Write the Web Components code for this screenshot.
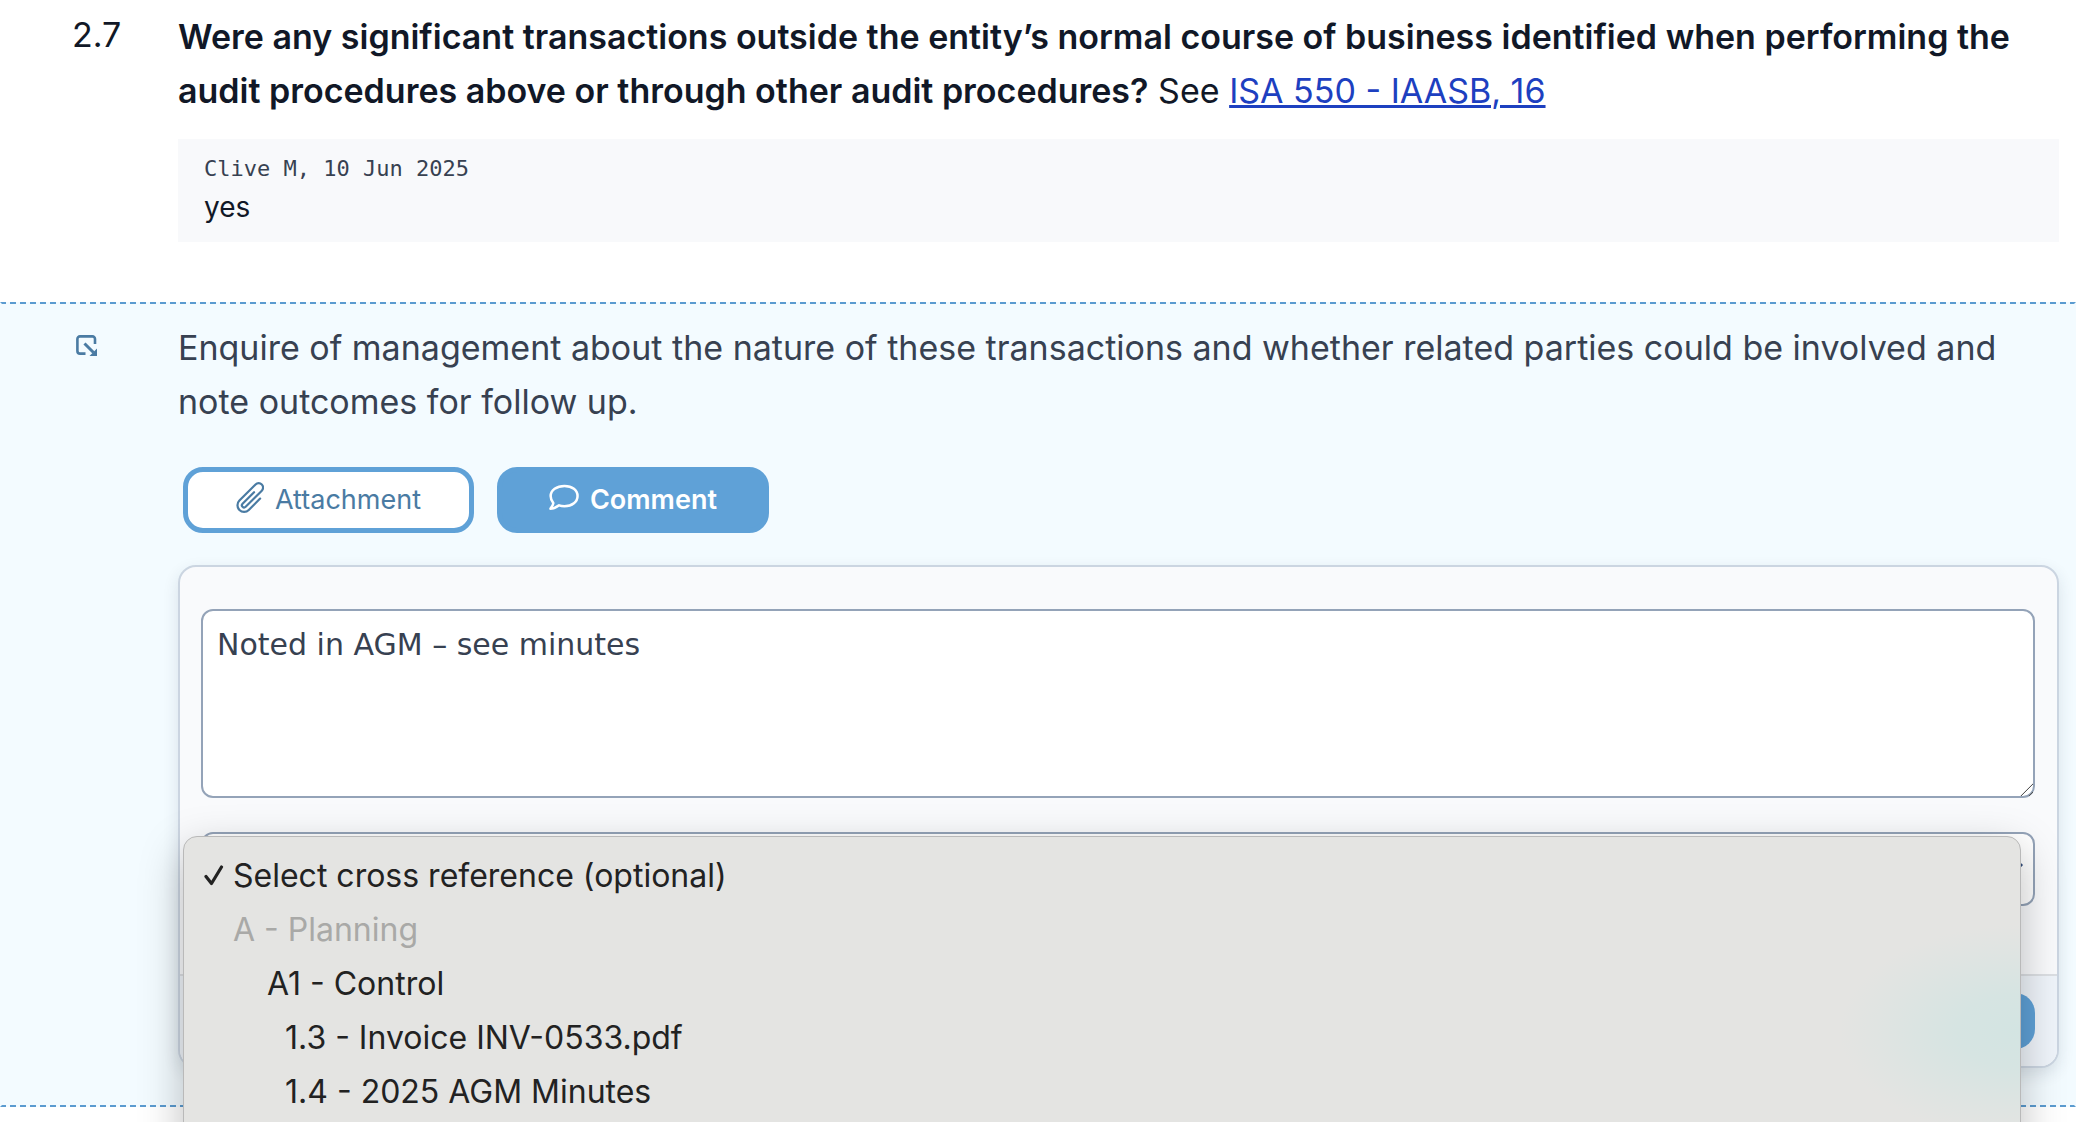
<!DOCTYPE html>
<html lang="en">
<head>
<meta charset="utf-8">
<title>Audit procedures</title>
<style>
body {
    margin: 0;
    background-color: #ffffff;
    color: #111827;
    font-family: Inter, 'Liberation Sans', sans-serif;
    font-size: 34px;
    line-height: 54px;
}
</style>
</head>
<body>

<template id="procedure-row">
<style>
:host {
    display: grid;
    grid-template-columns: 106px minmax(0, 1fr);
    padding: 10px 17px 60px 72px;
}
:host([sub]) {
    padding: 17px 15px 37px 70px;
    border: 2px dashed;
    border-color: #5b9bd0 transparent;
    background-color: #f3fbff;
    color: #374151;
}
.text {
    margin: 0;
}
.ref {
    line-height: 50px;
}
</style>
<div class="ref"><slot name="ref"></slot></div>
<div class="main">
    <p class="text"><slot name="text"></slot></p>
    <slot></slot>
</div>
</template>

<template id="comment-note">
<style>
:host {
    display: block;
    margin-top: 21px;
    padding: 12px 26px 15px;
    background-color: #f8f9fb;
}
.meta {
    color: #374151;
    font-family: 'DejaVu Sans Mono', monospace;
    font-size: 22px;
    line-height: 36px;
}
.body {
    font-size: 28px;
    line-height: 40px;
}
</style>
<div class="meta"><slot name="meta"></slot></div>
<div class="body"><slot></slot></div>
</template>

<template id="sub-icon">
<style>
:host {
    display: block;
    padding: 14px 0 0 4px;
    line-height: 0;
}
</style>
<svg width="22" height="22" viewBox="0 0 22 22" fill="none" stroke="#4a7ba3" stroke-width="2.600">
    <path d="M19 9V4a2.600 2.600 0 0 0-2.600-2.600H4A2.600 2.600 0 0 0 1.400 4v12A2.600 2.600 0 0 0 4 18.600h5.500"/>
    <path d="M8.500 8.500l9 9" stroke-width="3"/>
    <path d="M21 13.500v7.500h-7.500z" fill="#4a7ba3" stroke="none"/>
</svg>
</template>

<template id="action-button">
<style>
:host {
    display: block;
}
button {
    display: flex;
    align-items: center;
    gap: 11px;
    height: 66px;
    padding: 0 48px;
    border: 5px solid #5fa1d7;
    border-radius: 20px;
    background-color: #ffffff;
    color: #4a7ba3;
    font: 400 27px/40px Inter, sans-serif;
}
:host([primary]) button {
    padding: 0 47px;
    background-color: #5fa1d7;
    color: #ffffff;
    font-weight: 600;
}
::slotted(svg) {
    margin-bottom: 5px;
}
</style>
<button type="button"><slot name="icon"></slot><slot></slot></button>
</template>

<template id="comment-form">
<style>
:host {
    display: block;
    margin-top: 32px;
    border: 2px solid #cbd5e1;
    border-radius: 18px;
    background-color: #f9fafc;
    box-shadow: 0 6px 16px rgba(30, 50, 70, 0.12);
}
.fields {
    display: flex;
    flex-direction: column;
    gap: 34px;
    padding: 42px 22px 68px 21px;
}
textarea {
    display: block;
    box-sizing: border-box;
    width: 100%;
    height: 189px;
    margin: 0;
    padding: 14px;
    border: 2px solid #94a3b8;
    border-radius: 12px;
    background-color: #ffffff;
    color: #374151;
    font: 400 30px/40px 'DejaVu Sans', sans-serif;
    resize: vertical;
}
textarea::-webkit-scrollbar {
    width: 18px;
    height: 18px;
}
textarea::-webkit-resizer {
    background: linear-gradient(135deg, transparent 53%, #555555 54%, #555555 58%, transparent 59%, transparent 78%, #555555 79%, #555555 83%, transparent 84%) 0 0 / 16px 16px no-repeat;
}
.footer {
    display: flex;
    justify-content: flex-end;
    padding: 17px 22px;
    border-top: 2px solid #dcdfe3;
    border-radius: 0 0 16px 16px;
    background-color: #eff4fa;
}
.save {
    width: 160px;
    height: 56px;
    border: 0;
    border-radius: 20px;
    background-color: #5fa1d7;
}
</style>
<div class="fields">
    <textarea aria-label="Comment">Noted in AGM – see minutes</textarea>
    <cross-reference></cross-reference>
</div>
<div class="footer"><button class="save" type="submit" aria-label="Save"></button></div>
</template>

<template id="cross-reference">
<style>
:host {
    display: block;
    position: relative;
}
.field {
    display: grid;
    align-items: center;
}
.field > * {
    grid-area: 1 / 1;
}
select {
    box-sizing: border-box;
    width: 100%;
    height: 74px;
    border: 2px solid #94a3b8;
    border-radius: 12px;
    background-color: #ffffff;
    appearance: none;
}
svg {
    justify-self: end;
    margin-right: 11px;
}
/* open list, lies over the form and runs past the page */
.menu {
    position: absolute;
    z-index: 1;
    top: 4px;
    left: -18px;
    right: 14px;
    height: 420px;
    box-sizing: border-box;
    margin: 0;
    padding: 12px 20px;
    border: 1px solid #b9b9b9;
    border-radius: 14px;
    background: radial-gradient(ellipse 180px 106px at 100% 194px, #d3e4e2 0%, #d6e4e2 35%, #dfe4e2 75%, #e4e4e2 100%) #e4e4e2;
    box-shadow: 0 14px 44px rgba(0, 0, 0, 0.26);
    color: #222222;
    font-family: Inter, sans-serif;
    font-size: 32px;
    list-style: none;
}
.menu li {
    display: flex;
    align-items: center;
    height: 54px;
    padding-left: 29px;
}
.menu li.selected {
    gap: 9px;
    padding-left: 0;
}
.menu .group {
    color: #a9a9a7;
}
.menu .level1 {
    padding-left: 63px;
}
.menu .level2 {
    padding-left: 81px;
}
.menu svg {
    margin: 0;
}
</style>
<div class="field">
    <select aria-label="Cross reference"></select>
    <svg width="24" height="14" viewBox="0 0 24 14" fill="none" stroke="#2f4a7a" stroke-width="3"><path d="M2 2l10 10L22 2"/></svg>
</div>
<ul class="menu" role="listbox" aria-label="Cross reference">
    <li class="selected" role="option" aria-selected="true"><svg width="20" height="22" viewBox="0 0 20 22" fill="none" stroke="#222222" stroke-width="3.200" stroke-linecap="round" stroke-linejoin="round"><path d="M2 11.500l5.500 7L17.500 2"/></svg>Select cross reference (optional)</li>
    <li class="group">A - Planning</li>
    <li class="level1" role="option">A1 - Control</li>
    <li class="level2" role="option">1.3 - Invoice INV-0533.pdf</li>
    <li class="level2" role="option">1.4 - 2025 AGM Minutes</li>
</ul>
</template>

<template id="audit-page">
<style>
:host {
    display: block;
    height: 100vh;
    overflow: hidden;
}
.actions {
    display: flex;
    gap: 23px;
    padding: 38px 5px 0;
}
b {
    font-weight: 600;
}
a {
    color: #1d40c0;
    text-decoration-thickness: 3px;
}
</style>
<procedure-row>
    <span slot="ref">2.7</span>
    <span slot="text"><b>Were any significant transactions outside the entity’s normal course of business identified when performing the audit procedures above or through other audit procedures?</b> See <a href="#isa550">ISA 550 - IAASB, 16</a></span>
    <comment-note><span slot="meta">Clive M, 10 Jun 2025</span>yes</comment-note>
</procedure-row>
<procedure-row sub>
    <sub-icon slot="ref"></sub-icon>
    <span slot="text">Enquire of management about the nature of these transactions and whether related parties could be involved and note outcomes for follow up.</span>
    <div class="actions">
        <action-button>
            <svg slot="icon" width="28" height="31" viewBox="2 1.500 19 21" fill="none" stroke="currentColor" stroke-width="1.500" stroke-linecap="round" stroke-linejoin="round"><path d="m18.375 12.739-7.693 7.693a4.500 4.500 0 0 1-6.364-6.364l10.940-10.940A3 3 0 1 1 19.500 7.372L8.552 18.320m5.698-9.941-7.810 7.810a1.500 1.500 0 0 0 2.112 2.130"/></svg>
            Attachment
        </action-button>
        <action-button primary>
            <svg slot="icon" width="30" height="27" viewBox="0 0 31 27" fill="none" stroke="currentColor" stroke-width="2.600" stroke-linejoin="round"><path d="M16 1.500C24 1.500 29.500 6 29.500 12S24 22.500 16 22.500c-2 0-4-.3-5.600-.9C8 23.500 5 25 1.500 25c1.700-1.800 2.700-3.700 3-5.700C2.700 17.300 1.700 14.800 1.700 12 1.700 6 8 1.500 16 1.500z"/></svg>
            Comment
        </action-button>
    </div>
    <comment-form></comment-form>
</procedure-row>
</template>

<audit-page></audit-page>

<script>
// every element is a plain clone of the template with its own name
function define(name) {
    const template = document.getElementById(name);

    window.customElements.define(name, class extends HTMLElement {
        constructor() {
            super();

            this.attachShadow({ mode: 'open' });
            this.shadowRoot.appendChild(template.content.cloneNode(true));
        }
    });
}

define('procedure-row');
define('comment-note');
define('sub-icon');
define('action-button');
define('cross-reference');
define('comment-form');
define('audit-page');
</script>
</body>
</html>
